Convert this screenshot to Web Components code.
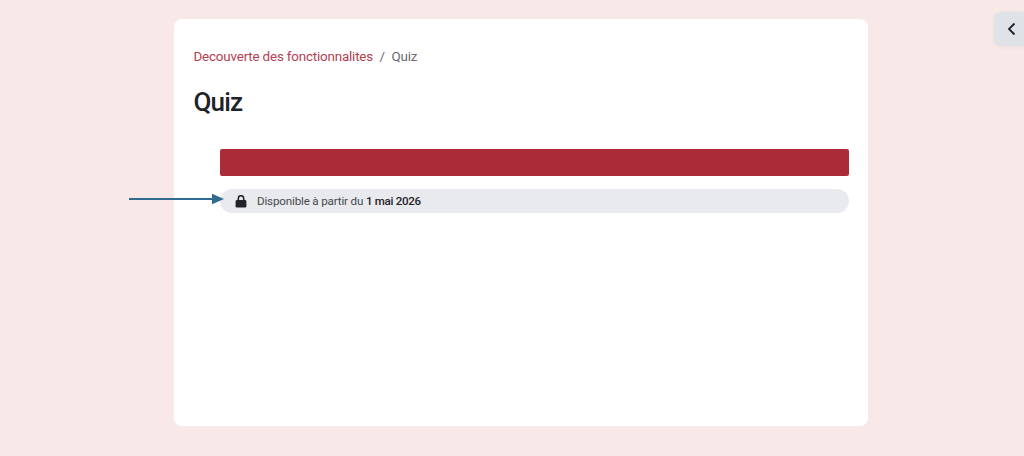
<!doctype html>
<html lang="fr"><head><meta charset="utf-8"><title>Quiz</title>
<style>
html,body{margin:0;height:456px;overflow:hidden;background:#f9e8e8;font-family:Roboto,"Liberation Sans",sans-serif}
</style></head><body>
<quiz-page></quiz-page>
<script>
function def(name,html){customElements.define(name,class extends HTMLElement{constructor(){super();this.attachShadow({mode:'open'}).innerHTML=html}})}
def('quiz-crumbs',`<style>:host{display:flex;gap:6.5px;font-size:13.4px;line-height:20px;color:#666a70;letter-spacing:-.18px}a{color:#b3404f;text-decoration:none}</style><a href="#">Decouverte des fonctionnalites</a><span>/</span><span>Quiz</span>`);
def('quiz-lock',`<style>:host{display:flex;align-items:center;gap:10px;height:24px;padding-left:15px;background:#e9eaee;border-radius:12px;font-size:11.6px;letter-spacing:-.16px;color:#44484f}b{font-weight:500;color:#1f2329;letter-spacing:-.3px}svg{display:block}</style><svg width="12" height="13" viewBox="0 0 12 13"><path fill="none" stroke="#1f2329" stroke-width="1.6" d="M3.3 6V3.4a2.7 2.7 0 0 1 5.4 0V6"/><rect x=".6" y="5" width="10.8" height="7.6" rx="1.4" fill="#1f2329"/></svg><span>Disponible à partir du <b>1 mai 2026</b></span>`);
def('quiz-arrow',`<style>:host{position:absolute;left:-91px;top:4px;display:block;width:95px;height:12px}svg{display:block}</style><svg width="95" height="12" viewBox="0 0 95 12"><path d="M0 6H86" stroke="#2f6a8f" stroke-width="2"/><path d="M83 .8 95 6 83 11.2z" fill="#2f6a8f"/></svg>`);
def('quiz-activity',`<style>:host{display:block;margin:29px 0 0 26.5px}.bar{height:27px;background:#ac2b38;border-radius:2px}.w{position:relative;margin-top:13px}</style><div class="bar"></div><div class="w"><quiz-lock></quiz-lock><quiz-arrow></quiz-arrow></div>`);
def('quiz-card',`<style>:host{display:block;box-sizing:border-box;width:694px;height:407px;background:#fff;border-radius:8px;padding:28px 19px 0 19.5px}h1{margin:17px 0 0;font-size:26px;line-height:36px;font-weight:500;color:#1f2329;letter-spacing:-.8px}</style><quiz-crumbs></quiz-crumbs><h1>Quiz</h1><quiz-activity></quiz-activity>`);
def('quiz-toggle',`<style>:host{position:absolute;top:12px;right:0;width:30px;height:34px;display:flex;align-items:center;justify-content:center;background:#dfe3e8;border-radius:6px 0 0 6px;box-shadow:0 1px 4px rgba(0,0,0,.06)}svg{display:block;margin-right:-5px}</style><svg width="10" height="14" viewBox="0 0 10 14"><path d="M7.5 1.5 2 7l5.5 5.5" fill="none" stroke="#1f2329" stroke-width="1.8"/></svg>`);
def('quiz-page',`<style>:host{display:block;position:relative;height:456px;padding-top:19px;box-sizing:border-box;padding-left:174px}</style><quiz-card></quiz-card><quiz-toggle></quiz-toggle>`);
</script>
</body></html>
